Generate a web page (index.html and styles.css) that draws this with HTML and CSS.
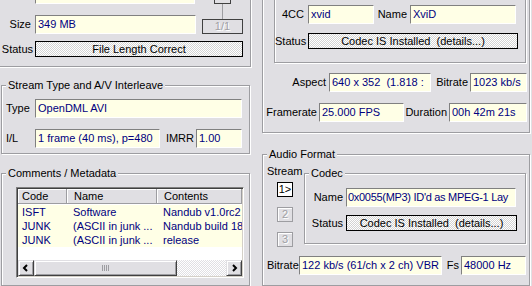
FILE: index.html
```html
<!DOCTYPE html>
<html lang="en">
<head>
    <meta charset="UTF-8">
    <meta name="viewport" content="width=device-width, initial-scale=1.0">
    <title>GSpot - File Info</title>
    <link rel="stylesheet" href="styles.css">
</head>
<body>
    <div class="window">
        <!-- left column: file, stream type, metadata -->
        <div class="col col-left">
            <div class="group group-file">
                <div class="file-top">
                    <div class="file-fields">
                        <div class="row"><span class="lbl lbl-size"></span><div class="field w160"></div></div>
                        <div class="row"><span class="lbl lbl-size">Size</span><div class="field w161">349 MB</div></div>
                    </div>
                    <div class="pager">
                        <div class="pager-box"></div>
                        <div class="pager-line"></div>
                        <div class="pager-btn">1/1</div>
                    </div>
                </div>
                <div class="row file-status">
                    <span class="lbl lbl-fstatus">Status</span>
                    <div class="status w208">File Length Correct</div>
                </div>
            </div>

            <div class="group group-stream">
                <div class="group-title">Stream Type and A/V Interleave</div>
                <div class="row">
                    <span class="lbl lbl-type">Type</span>
                    <div class="field w207">OpenDML AVI</div>
                </div>
                <div class="row">
                    <span class="lbl lbl-type">I/L</span>
                    <div class="field w125">1 frame (40 ms), p=480</div>
                    <span class="lbl lbl-imrr">IMRR</span>
                    <div class="field w46">1.00</div>
                </div>
            </div>

            <div class="group group-comments">
                <div class="group-title">Comments / Metadata</div>
                <div class="list">
                    <div class="list-head">
                        <div class="col-code">Code</div>
                        <div class="col-name">Name</div>
                        <div class="col-contents">Contents</div>
                    </div>
                    <div class="list-row">
                        <div class="col-code">ISFT</div>
                        <div class="col-name">Software</div>
                        <div class="col-contents">Nandub v1.0rc2</div>
                    </div>
                    <div class="list-row">
                        <div class="col-code">JUNK</div>
                        <div class="col-name">(ASCII in junk ...</div>
                        <div class="col-contents">Nandub build 18</div>
                    </div>
                    <div class="list-row">
                        <div class="col-code">JUNK</div>
                        <div class="col-name">(ASCII in junk ...</div>
                        <div class="col-contents">release</div>
                    </div>
                    <div class="hscroll">
                        <div class="sb-btn">
                            <svg width="8" height="8" viewBox="0 0 8 8"><polyline points="5,1 2,4 5,7" fill="none" stroke="#000" stroke-width="2"/></svg>
                        </div>
                        <div class="sb-thumb"><span class="grip"></span></div>
                        <div class="sb-track"></div>
                        <div class="sb-btn">
                            <svg width="8" height="8" viewBox="0 0 8 8"><polyline points="3,1 6,4 3,7" fill="none" stroke="#000" stroke-width="2"/></svg>
                        </div>
                    </div>
                </div>
            </div>
        </div>

        <!-- right column: video + audio -->
        <div class="col col-right">
            <div class="group group-video">
                <div class="group group-vcodec">
                    <div class="row">
                        <span class="lbl lbl-4cc">4CC</span>
                        <div class="field w66">xvid</div>
                        <span class="lbl lbl-name">Name</span>
                        <div class="field w106">XviD</div>
                    </div>
                    <div class="row">
                        <span class="lbl lbl-vstatus">Status</span>
                        <div class="status w210">Codec IS Installed&nbsp; (details...)</div>
                    </div>
                </div>
                <div class="row row-aspect">
                    <span class="lbl lbl-aspect">Aspect</span>
                    <div class="field w102">640 x 352&nbsp; (1.818 :</div>
                    <span class="lbl lbl-vbitrate">Bitrate</span>
                    <div class="field w57">1023 kb/s</div>
                </div>
                <div class="row row-frame">
                    <span class="lbl lbl-framerate">Framerate</span>
                    <div class="field w85">25.000 FPS</div>
                    <span class="lbl lbl-duration">Duration</span>
                    <div class="field w78">00h 42m 21s</div>
                </div>
            </div>

            <div class="group group-audio">
                <div class="group-title">Audio Format</div>
                <div class="audio-top">
                    <div class="stream-col">
                        <span class="stream-lbl">Stream</span>
                        <div class="stream-btn active">1&gt;</div>
                        <div class="stream-btn">2</div>
                        <div class="stream-btn">3</div>
                    </div>
                    <div class="group group-acodec">
                        <div class="group-title">Codec</div>
                        <div class="row">
                            <span class="lbl lbl-acodec">Name</span>
                            <div class="field w170 tight">0x0055(MP3) ID'd as MPEG-1 Lay</div>
                        </div>
                        <div class="row">
                            <span class="lbl lbl-acodec">Status</span>
                            <div class="status w171">Codec IS Installed&nbsp; (details...)</div>
                        </div>
                    </div>
                </div>
                <div class="row row-abitrate">
                    <span class="lbl lbl-abitrate">Bitrate</span>
                    <div class="field w143">122 kb/s (61/ch x 2 ch) VBR</div>
                    <span class="lbl lbl-fs">Fs</span>
                    <div class="field w65">48000 Hz</div>
                </div>
            </div>
        </div>
    </div>
</body>
</html>
```

FILE: styles.css
```css
* {
    box-sizing: border-box;
}
body {
    margin: 0;
    width: 532px;
    height: 286px;
    overflow: hidden;
    background-color: #e0dfe3;
    font-family: "Liberation Sans", Arial, sans-serif;
    font-size: 11px;
    line-height: 13px;
    color: #000;
}
.window {
    display: grid;
    grid-template-columns: 260px 272px;
}
.col {
    display: flex;
    flex-direction: column;
    align-items: flex-start;
}
.col-left {
    padding-left: 1px;
}
.col-right {
    padding-left: 2px;
}

/* etched group box */
.group {
    position: relative;
    border: 1px solid #9d9da1;
    box-shadow: 1px 1px 0 #fff, inset 1px 1px 0 #fff;
}
.group-title {
    position: absolute;
    top: -7px;
    left: 4px;
    padding: 0 2px;
    background-color: #e0dfe3;
    white-space: nowrap;
}

.row {
    display: flex;
    align-items: center;
}
.lbl {
    flex: none;
    white-space: nowrap;
}
.field {
    flex: none;
    height: 19px;
    padding: 0 2px;
    line-height: 17px;
    background-color: #ffffe6;
    color: #000080;
    border: 1px solid;
    border-color: #808080 #fff #fff #808080;
    white-space: nowrap;
    overflow: hidden;
}
.tight {
    padding: 0 1px;
    letter-spacing: -0.3px;
}
.status {
    flex: none;
    height: 16px;
    line-height: 14px;
    text-align: center;
    border: 1px solid #000;
    background: repeating-conic-gradient(#fff 0 25%, #d4d4d4 0 50%) 0 0 / 2px 2px;
    white-space: nowrap;
    overflow: hidden;
}

.w46 { width: 46px; }
.w57 { width: 57px; }
.w65 { width: 65px; }
.w66 { width: 66px; }
.w78 { width: 78px; }
.w85 { width: 85px; }
.w102 { width: 102px; }
.w106 { width: 106px; }
.w125 { width: 125px; }
.w143 { width: 143px; }
.w160 { width: 160px; }
.w161 { width: 161px; }
.w170 { width: 170px; }
.w171 { width: 171px; }
.w207 { width: 207px; }
.w208 { width: 208px; }
.w210 { width: 210px; }

/* file group (cut off at the top) */
.group-file {
    width: 261px;
    margin: -20px 0 0 -11px;
    padding: 4px 0 9px 9px;
}
.file-top {
    display: flex;
    align-items: flex-end;
}
.file-fields {
    display: flex;
    flex-direction: column;
    gap: 11px;
}
.lbl-size {
    width: 31px;
    margin-right: 4px;
    text-align: right;
}
.pager {
    width: 41px;
    margin-left: 6px;
    display: flex;
    flex-direction: column;
    align-items: center;
}
.pager-box {
    width: 17px;
    height: 12px;
    border: 1px solid #404040;
}
.pager-line {
    width: 1px;
    height: 15px;
    background-color: #9d9da1;
}
.pager-btn {
    width: 41px;
    height: 15px;
    border: 1px solid #404040;
    text-align: center;
    color: #a0a0a4;
    text-shadow: 1px 1px 0 #fff;
}
.file-status {
    margin-top: 7px;
}
.lbl-fstatus {
    width: 33px;
    margin-right: 2px;
    text-align: right;
}

/* stream type */
.group-stream {
    width: 249px;
    margin-top: 18px;
    padding: 13px 0 5px 4px;
}
.group-stream .row + .row {
    margin-top: 11px;
}
.lbl-type {
    width: 29px;
}
.lbl-imrr {
    width: 34px;
    margin-right: 2px;
    text-align: right;
}

/* comments list */
.group-comments {
    width: 249px;
    margin-top: 19px;
    padding: 13px 5px 7px 14px;
}
.list {
    height: 91px;
    padding: 1px;
    display: flex;
    flex-direction: column;
    background-color: #fff;
    border: 1px solid;
    border-color: #808080 #fff #fff #808080;
    box-shadow: inset 1px 1px 0 #404040, inset -1px -1px 0 #d4d0c8;
    overflow: hidden;
}
.list-head, .list-row {
    display: grid;
    grid-template-columns: 49px 90px 1fr;
    white-space: nowrap;
}
.list-head {
    height: 15px;
    margin-bottom: 1px;
}
.list-head div {
    height: 15px;
    padding-left: 7px;
    line-height: 14px;
    background-color: #e0dfe3;
    border-right: 1px solid #9d9da1;
    border-bottom: 1px solid #9d9da1;
    box-shadow: inset 1px 1px 0 #fff;
    overflow: hidden;
}
.list-head .col-code {
    padding-left: 4px;
}
.list-row {
    height: 14px;
    line-height: 14px;
    background-color: #ffffe6;
    color: #000080;
}
.list-row div {
    padding-left: 6px;
    overflow: hidden;
}
.list-row .col-code {
    padding-left: 4px;
}
.hscroll {
    margin-top: auto;
    height: 16px;
    display: flex;
}
.sb-btn {
    width: 16px;
    height: 16px;
    display: flex;
    align-items: center;
    justify-content: center;
    background-color: #e0dfe3;
    border: 1px solid;
    border-color: #e0dfe3 #404040 #404040 #e0dfe3;
    box-shadow: inset 1px 1px 0 #fff, inset -1px -1px 0 #9d9da1;
}
.sb-thumb {
    width: 143px;
    display: flex;
    align-items: center;
    justify-content: center;
    background-color: #e0dfe3;
    border: 1px solid;
    border-color: #e0dfe3 #404040 #404040 #e0dfe3;
    box-shadow: inset 1px 1px 0 #fff, inset -1px -1px 0 #9d9da1;
}
.grip {
    width: 7px;
    height: 6px;
    background: repeating-linear-gradient(90deg, #9d9da1 0 1px, transparent 1px 2px);
}
.sb-track {
    flex: 1;
    background: repeating-conic-gradient(#fff 0 25%, #e0dfe3 0 50%) 0 0 / 2px 2px;
}

/* video */
.group-video {
    width: 268px;
    margin-top: -40px;
    padding: 0 2px 10px 2px;
}
.group-vcodec {
    width: 252px;
    margin: 10px 0 0 9px;
    padding: 33px 0 13px 0;
}
.group-vcodec .row + .row {
    margin-top: 9px;
}
.lbl-4cc {
    width: 29px;
    margin-right: 4px;
    text-align: right;
}
.lbl-name {
    width: 33px;
    margin-right: 3px;
    text-align: right;
}
.lbl-vstatus {
    width: 31px;
    margin-right: 2px;
    text-align: right;
}
.row-aspect {
    margin-top: 10px;
}
.row-frame {
    margin-top: 11px;
}
.lbl-aspect {
    width: 61px;
    margin-right: 3px;
    text-align: right;
}
.lbl-vbitrate {
    width: 37px;
    margin-right: 2px;
    text-align: right;
}
.lbl-framerate {
    width: 52px;
    margin-right: 2px;
    text-align: right;
}
.lbl-duration {
    width: 43px;
    margin-right: 2px;
    text-align: right;
}

/* audio */
.group-audio {
    width: 268px;
    margin-top: 21px;
    padding: 10px 3px 10px 4px;
}
.audio-top {
    display: flex;
    align-items: flex-start;
}
.stream-col {
    width: 37px;
    display: flex;
    flex-direction: column;
}
.stream-lbl {
    height: 13px;
}
.stream-btn {
    width: 16px;
    height: 15px;
    margin: 10px 0 0 10px;
    line-height: 13px;
    text-align: center;
    border: 1px solid #9d9da1;
    box-shadow: inset 1px 1px 0 #fff;
    color: #a0a0a4;
    text-shadow: 1px 1px 0 #fff;
}
.stream-btn.active {
    margin-top: 4px;
    border-color: #000;
    background-color: #fff;
    box-shadow: none;
    color: #000;
    text-shadow: none;
}
.group-acodec {
    width: 222px;
    margin-top: 8px;
    padding: 14px 0 12px 0;
}
.group-acodec .row + .row {
    margin-top: 8px;
}
.lbl-acodec {
    width: 38px;
    margin-right: 3px;
    text-align: right;
}
.row-abitrate {
    margin-top: 9px;
}
.lbl-abitrate {
    width: 30px;
    margin-right: 2px;
}
.lbl-fs {
    width: 17px;
    margin-right: 2px;
    text-align: right;
}
```
